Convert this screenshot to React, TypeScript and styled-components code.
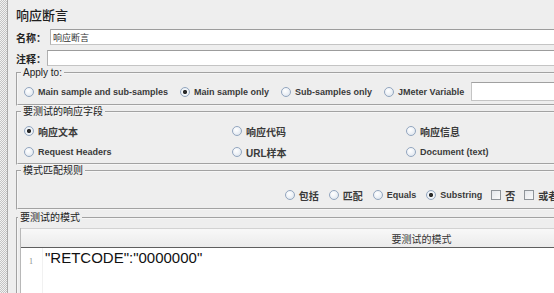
import styled, { createGlobalStyle } from 'styled-components';

const GlobalStyle = createGlobalStyle`
  html, body {
    margin: 0;
    padding: 0;
    background: #eeeeee;
    overflow: hidden;
  }
  body {
    font-family: "Liberation Sans", Arial, "Noto Sans CJK SC", sans-serif;
    color: #2a2a2a;
  }
`;

const Screen = styled.div`
  display: flex;
  width: 830px;
  height: 293px;
  overflow: hidden;
`;

const Splitter = styled.div`
  flex: none;
  width: 7px;
  border-right: 1px solid #a9a9a9;
  background: repeating-conic-gradient(#c4c4c4 0 25%, #f2f2f2 0 50%) 0 0 / 2px 2px;
`;

const Panel = styled.div`
  flex: 1;
  min-width: 0;
  padding: 0 4px 0 8px;
`;

const Title = styled.h1`
  margin: 0;
  height: 29px;
  box-sizing: border-box;
  padding-top: 7px;
  font-family: "Noto Sans CJK SC", sans-serif;
  font-size: 13px;
  line-height: 16px;
  font-weight: 500;
  color: #1e1e1e;
`;

const FieldRow = styled.div<{ $gap?: number }>`
  display: flex;
  align-items: center;
  height: 16px;
  margin-bottom: ${p => p.$gap ?? 5}px;
`;

const FieldLabel = styled.label<{ $space?: number }>`
  font-family: "Noto Sans CJK SC", sans-serif;
  font-weight: bold;
  font-size: 10px;
  margin-right: ${p => p.$space ?? 4}px;
  white-space: nowrap;
  color: #222;
`;

const TextField = styled.input`
  flex: 1;
  align-self: stretch;
  min-width: 0;
  box-sizing: border-box;
  margin: 0;
  padding: 0 2px;
  background: #fff;
  border: 1px solid #c4c4c4;
  border-top-color: #9c9c9c;
  border-left-color: #b0b0b0;
  font-family: "Noto Sans CJK SC", sans-serif;
  font-size: 9px;
  color: #333;
  outline: none;
`;

const Group = styled.fieldset<{ $pad: string; $top?: number }>`
  margin: ${p => p.$top ?? 0}px 0 0;
  min-width: 0;
  border: 2px groove #f6f6f6;
  padding: ${p => p.$pad};
`;

const Legend = styled.legend`
  padding: 0 2px;
  margin-left: -2px;
  font-family: "Liberation Sans", "Noto Sans CJK SC", sans-serif;
  font-size: 10px;
  line-height: 12px;
  color: #222;
`;

const Row = styled.div<{ $center?: boolean; $height?: number; $gap?: number }>`
  display: flex;
  align-items: center;
  justify-content: ${p => (p.$center ? 'center' : 'flex-start')};
  gap: ${p => p.$gap ?? 11}px;
  height: ${p => p.$height ?? 20}px;
`;

const FieldGrid = styled.div`
  display: grid;
  grid-template-columns: 208px 174px 1fr;
  grid-auto-rows: 20px;
  row-gap: 1px;
  align-items: center;
`;

const Option = styled.label<{ $cjk?: boolean }>`
  display: inline-flex;
  align-items: center;
  gap: 4px;
  white-space: nowrap;
  font-weight: bold;
  font-size: ${p => (p.$cjk ? 10 : 9)}px;
  color: #3a3a3a;
`;

const RadioDot = styled.span<{ $on?: boolean }>`
  flex: none;
  width: 10px;
  height: 10px;
  margin-left: 1px;
  box-sizing: border-box;
  border-radius: 50%;
  border: 1px solid #93a6bf;
  background: ${p =>
    p.$on
      ? 'radial-gradient(circle, #2b2b2b 0 1.8px, #f4f7fa 2.4px, #d9e2ec 100%)'
      : 'radial-gradient(circle at 40% 35%, #ffffff 0, #f1f4f8 40%, #d6dfea 100%)'};
`;

const CheckBox = styled.span`
  flex: none;
  width: 10px;
  height: 10px;
  box-sizing: border-box;
  border: 1px solid #8f9499;
  background: linear-gradient(135deg, #e4e7eb, #fbfbfb);
`;

const VarField = styled.input`
  flex: 1;
  align-self: stretch;
  min-width: 0;
  margin: 0 0 0 -4px;
  box-sizing: border-box;
  background: #fff;
  border: 1px solid #c4c4c4;
  border-top-color: #a0a0a0;
  outline: none;
`;

const Table = styled.div`
  display: flex;
  flex-direction: column;
  border-left: 1px solid #b8b8b8;
  background: #fff;
`;

const TableHeader = styled.div`
  flex: none;
  height: 18px;
  display: flex;
  align-items: center;
  justify-content: center;
  background: linear-gradient(#f8f8f8, #ebebeb);
  border-top: 1px solid #d2d2d2;
  border-bottom: 1px solid #5e5e5e;
  font-family: "Noto Sans CJK SC", sans-serif;
  font-size: 10px;
  color: #333;
`;

const Editor = styled.div`
  flex: none;
  display: flex;
  height: 60px;
  background: #fff;
`;

const Gutter = styled.div`
  flex: none;
  width: 22px;
  box-sizing: border-box;
  padding: 9px 0 0 8px;
  border-right: 1px solid #f1f1f1;
  font-family: "Liberation Serif", serif;
  font-size: 8px;
  color: #8a8a8a;
`;

const Code = styled.div`
  padding: 1px 0 0 2px;
  font-family: "Liberation Sans", Arial, sans-serif;
  font-size: 15px;
  line-height: 18px;
  color: #111;
`;

const Radio = ({ label, on, cjk }: { label: string; on?: boolean; cjk?: boolean }) => (
  <Option $cjk={cjk}>
    <RadioDot $on={on} />
    {label}
  </Option>
);

const Check = ({ label }: { label: string }) => (
  <Option $cjk>
    <CheckBox />
    {label}
  </Option>
);

export default function App() {
  return (
    <>
      <GlobalStyle />
      <Screen>
        <Splitter />
        <Panel>
          <Title>响应断言</Title>
          <FieldRow>
            <FieldLabel>名称：</FieldLabel>
            <TextField readOnly value="响应断言" />
          </FieldRow>
          <FieldRow $gap={1}>
            <FieldLabel $space={1}>注释：</FieldLabel>
            <TextField readOnly value="" />
          </FieldRow>

          <Group $pad="3px 5px 3px">
            <Legend>Apply to:</Legend>
            <Row $height={19}>
              <Radio label="Main sample and sub-samples" />
              <Radio label="Main sample only" on />
              <Radio label="Sub-samples only" />
              <Radio label="JMeter Variable" />
              <VarField readOnly value="" />
            </Row>
          </Group>

          <Group $pad="3px 5px 1px">
            <Legend>要测试的响应字段</Legend>
            <FieldGrid>
              <Radio label="响应文本" cjk on />
              <Radio label="响应代码" cjk />
              <Radio label="响应信息" cjk />
              <Radio label="Request Headers" />
              <Radio label="URL样本" cjk />
              <Radio label="Document (text)" />
            </FieldGrid>
          </Group>

          <Group $pad="8px 5px 3px">
            <Legend>模式匹配规则</Legend>
            <Row $center $gap={9}>
              <Radio label="包括" cjk />
              <Radio label="匹配" cjk />
              <Radio label="Equals" />
              <Radio label="Substring" on />
              <Check label="否" />
              <Check label="或者" />
            </Row>
          </Group>

          <Group $pad="4px 2px 0" $top={2}>
            <Legend>要测试的模式</Legend>
            <Table>
              <TableHeader>要测试的模式</TableHeader>
              <Editor>
                <Gutter>1</Gutter>
                <Code>"RETCODE":"0000000"</Code>
              </Editor>
            </Table>
          </Group>
        </Panel>
      </Screen>
    </>
  );
}
